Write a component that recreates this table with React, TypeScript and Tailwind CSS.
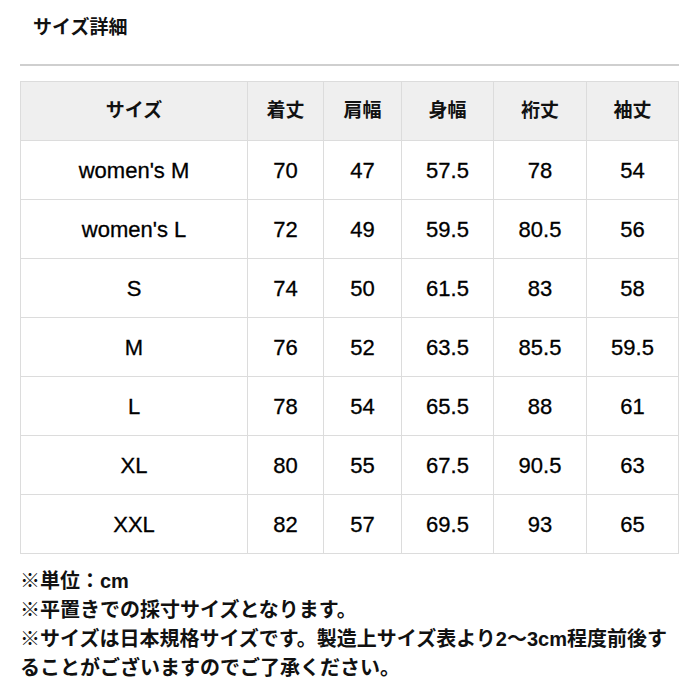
const headers = ['サイズ', '着丈', '肩幅', '身幅', '裄丈', '袖丈'];

const rows = [
  ['women\'s M', '70', '47', '57.5', '78', '54'],
  ['women\'s L', '72', '49', '59.5', '80.5', '56'],
  ['S', '74', '50', '61.5', '83', '58'],
  ['M', '76', '52', '63.5', '85.5', '59.5'],
  ['L', '78', '54', '65.5', '88', '61'],
  ['XL', '80', '55', '67.5', '90.5', '63'],
  ['XXL', '82', '57', '69.5', '93', '65'],
];

const widths = ['w-[227px]', 'w-[76px]', 'w-[78px]', 'w-[92px]', 'w-[93px]', 'w-[92px]'];

export default function App() {
  return (
    <div className="w-[700px] h-[700px] bg-white text-[#111] font-['Liberation_Sans','Noto_Sans_CJK_JP',sans-serif]">
      <div className="px-[20px]">
        <h2 className="pl-[13px] pt-[15px] h-[64px] text-[19px] leading-[25px] font-bold">サイズ詳細</h2>
        <div className="h-[2px] bg-[#cfcfcf] w-[659px]" />
        <table className="mt-[15px] border-collapse table-fixed w-[659px]">
          <thead>
            <tr className="bg-[#efefef]">
              {headers.map((h, i) => (
                <th key={h} className={`${widths[i]} h-[59px] border border-[#dcdcdc] text-center text-[19px] font-bold p-0`}>
                  {h}
                </th>
              ))}
            </tr>
          </thead>
          <tbody>
            {rows.map((r) => (
              <tr key={r[0]}>
                {r.map((c, i) => (
                  <td key={i} className="h-[59px] border border-[#dcdcdc] text-center text-[22px] text-black p-0 [-webkit-text-stroke:0.3px_black]">
                    {c}
                  </td>
                ))}
              </tr>
            ))}
          </tbody>
        </table>
        <div className="mt-[13px] text-[20px] leading-[29px] font-bold w-[659px]">
          <p>※単位：cm</p>
          <p>※平置きでの採寸サイズとなります。</p>
          <p>※サイズは日本規格サイズです。製造上サイズ表より2〜3cm程度前後することがございますのでご了承ください。</p>
        </div>
      </div>
    </div>
  );
}
